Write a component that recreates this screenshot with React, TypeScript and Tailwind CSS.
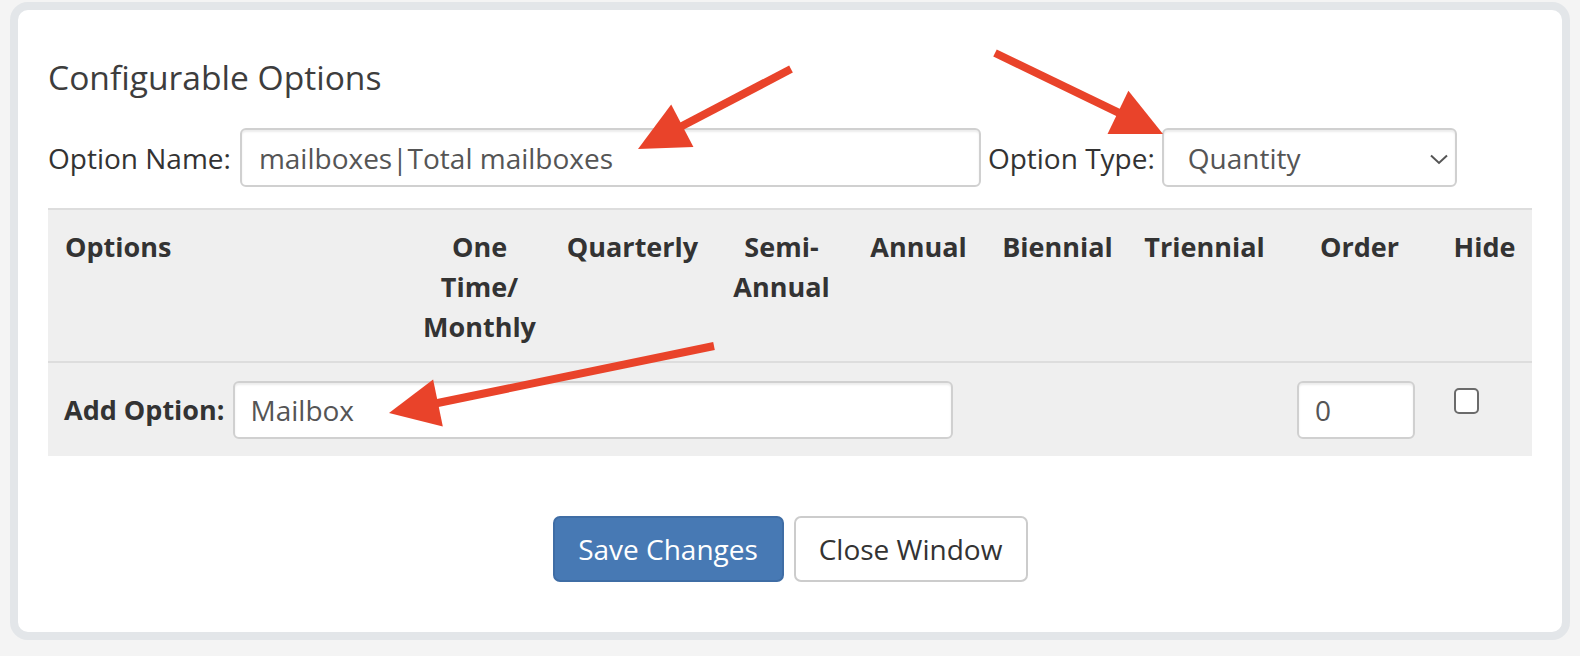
import React from "react";

const cols = "grid grid-cols-[360px_143px_163px_135px_139px_139px_155px_155px_95px]";

function Arrow({ x1, y1, x2, y2 }: { x1: number; y1: number; x2: number; y2: number }) {
  const dx = x2 - x1;
  const dy = y2 - y1;
  const len = Math.sqrt(dx * dx + dy * dy);
  const ux = dx / len;
  const uy = dy / len;
  const headLen = 50;
  const half = 24;
  const bx = x2 - ux * headLen;
  const by = y2 - uy * headLen;
  const px = -uy;
  const py = ux;
  const pts = `${x2},${y2} ${bx + px * half},${by + py * half} ${bx - px * half},${by - py * half}`;
  return (
    <g>
      <line x1={x1} y1={y1} x2={bx + ux * 4} y2={by + uy * 4} stroke="#e9432a" strokeWidth={8} />
      <polygon points={pts} fill="#e9432a" />
    </g>
  );
}

export default function App() {
  return (
    <div className="relative h-[656px] w-[1580px] overflow-hidden bg-[#f4f4f4] px-[10px] pt-[2px] font-['Open_Sans',sans-serif]">
      <div className="h-[638px] rounded-[18px] border-8 border-[#e3e6e9] bg-white px-[30px] pt-[47px]">
        <h2 className="text-[33.6px] font-normal leading-[40px] text-[#3d3d3d]">Configurable Options</h2>

        <div className="mt-[31px] flex h-[59px] items-center">
          <span className="text-[28px] leading-[40px] text-[#333]">Option Name:</span>
          <input
            defaultValue="mailboxes|Total mailboxes"
            className="ml-[9px] h-[59px] w-[741px] rounded-[6px] border-2 border-[#d0d0d0] bg-white px-[17px] text-[28px] text-[#555] shadow-[inset_0_2px_2px_rgba(0,0,0,0.075)] outline-none"
          />
          <span className="ml-[7px] text-[28px] leading-[40px] text-[#333]">Option Type:</span>
          <div className="relative ml-[7px] flex h-[59px] w-[295px] items-center rounded-[6px] border-2 border-[#d0d0d0] bg-white pl-[24px] text-[28px] text-[#555] shadow-[inset_0_2px_2px_rgba(0,0,0,0.075)]">
            Quantity
            <svg className="absolute right-[7px] top-[24px]" width="18" height="11" viewBox="0 0 18 11">
              <polyline points="1,1.5 9,9 17,1.5" fill="none" stroke="#555" strokeWidth="2" />
            </svg>
          </div>
        </div>

        <div className="mt-[21px]">
          <div className={`${cols} border-y-2 border-[#dddddd] bg-[#efefef] pb-[14px] pt-[17px] text-[27px] font-bold leading-[40px] text-[#333]`}>
            <div className="pl-[17px]">Options</div>
            <div className="text-center">One<br />Time/<br />Monthly</div>
            <div className="text-center">Quarterly</div>
            <div className="text-center">Semi-<br />Annual</div>
            <div className="text-center">Annual</div>
            <div className="text-center">Biennial</div>
            <div className="text-center">Triennial</div>
            <div className="text-center">Order</div>
            <div className="text-center">Hide</div>
          </div>
          <div className={`${cols} bg-[#efefef] pb-[17px] pt-[18px]`}>
            <div className="col-span-5 flex items-center pl-[16px]">
              <span className="text-[27px] font-bold leading-[40px] text-[#333]">Add Option:</span>
              <input
                defaultValue="Mailbox"
                className="ml-[8px] h-[58px] w-[720px] rounded-[6px] border-2 border-[#d0d0d0] bg-white px-[16px] text-[28px] text-[#555] shadow-[inset_0_2px_2px_rgba(0,0,0,0.075)] outline-none"
              />
            </div>
            <div />
            <div />
            <div className="pl-[15px]">
              <input
                defaultValue="0"
                className="h-[58px] w-[118px] rounded-[6px] border-2 border-[#d0d0d0] bg-white px-[16px] text-[28px] text-[#555] shadow-[inset_0_2px_2px_rgba(0,0,0,0.075)] outline-none"
              />
            </div>
            <div className="pl-[17px] pt-[7px]">
              <div className="h-[26px] w-[25px] rounded-[5px] border-2 border-[#6b6b6b] bg-white" />
            </div>
          </div>
        </div>

        <div className="mt-[60px] flex justify-center gap-[10px]">
          <button className="h-[66px] w-[231px] rounded-[7px] border-2 border-[#3f6da5] bg-[#4779b4] text-[28px] text-white">
            Save Changes
          </button>
          <button className="h-[66px] w-[234px] rounded-[7px] border-2 border-[#cccccc] bg-white text-[28px] text-[#333]">
            Close Window
          </button>
        </div>
      </div>

      <svg className="pointer-events-none absolute left-0 top-0" width="1580" height="656" viewBox="0 0 1580 656">
        <Arrow x1={791} y1={69} x2={638} y2={149} />
        <Arrow x1={995} y1={53} x2={1163} y2={134} />
        <Arrow x1={714} y1={346} x2={389} y2={413} />
      </svg>
    </div>
  );
}
